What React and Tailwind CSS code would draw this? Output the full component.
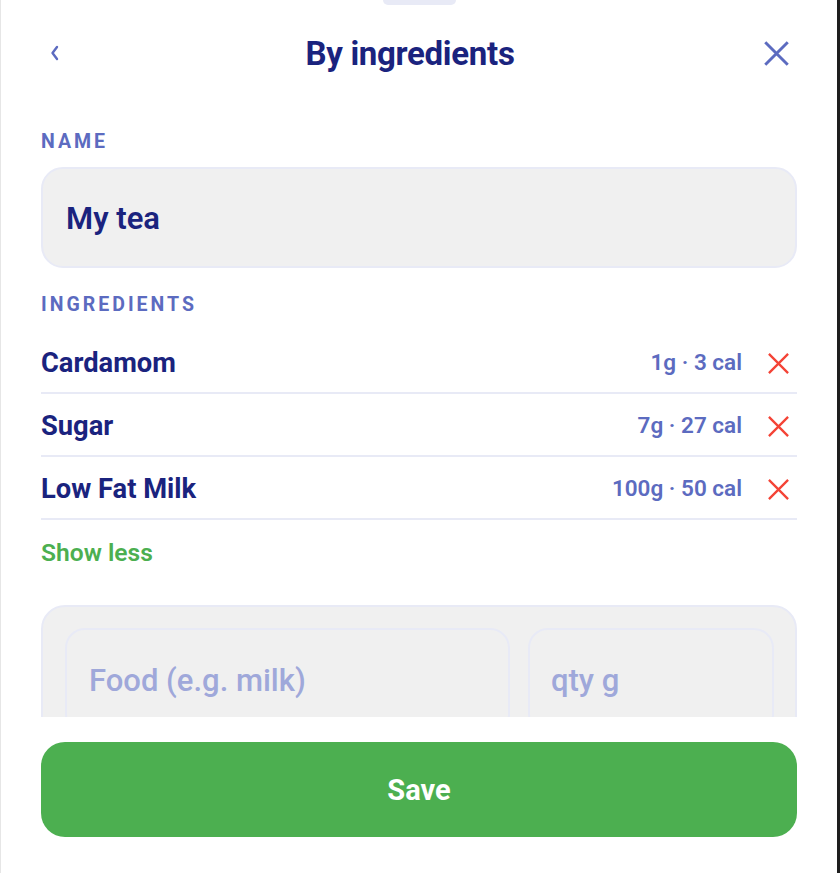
import React from 'react';

const ingredients = [
  { name: 'Cardamom', detail: '1g · 3 cal' },
  { name: 'Sugar', detail: '7g · 27 cal' },
  { name: 'Low Fat Milk', detail: '100g · 50 cal' },
];

function ChevronLeft() {
  return (
    <svg width="9" height="16" viewBox="0 0 9 16" fill="none">
      <path d="M7 2 L2.5 8 L7 14" stroke="#5c6bc0" strokeWidth="2.4" strokeLinecap="round" strokeLinejoin="round" />
    </svg>
  );
}

function Cross({ size, color, width }) {
  return (
    <svg width={size} height={size} viewBox="0 0 24 24" fill="none">
      <path d="M2 2 L22 22 M22 2 L2 22" stroke={color} strokeWidth={width} strokeLinecap="butt" />
    </svg>
  );
}

export default function App() {
  return (
    <div
      className="relative flex h-[873px] w-[840px] flex-col overflow-hidden border-l border-r-[3px] border-l-[#e6e6e6] border-r-[#1e1e1e] bg-white"
      style={{ fontFamily: 'Roboto, "Noto Sans", sans-serif' }}
    >
      {/* drag handle */}
      <div className="absolute left-[382px] top-0 h-[5px] w-[73px] rounded-b-[5px] bg-[#e8eaf6]" />

      <div className="flex h-[106px] shrink-0 items-center pl-[40px] pr-[40px]">
        <button className="flex w-[20px] justify-end pr-[2px]">
          <ChevronLeft />
        </button>
        <h1 className="flex-1 text-center text-[33px] font-bold leading-none tracking-[-0.3px] text-[#1a237e]">
          By ingredients
        </h1>
        <button className="flex w-[38px] justify-start pl-[4px]">
          <Cross size={27} color="#5c6bc0" width={2.6} />
        </button>
      </div>

      <div className="h-[611px] shrink-0 overflow-hidden pl-[40px] pr-[40px]">
        <div className="mt-[24px] text-[19.5px] font-bold leading-[24px] tracking-[3px] text-[#5c6bc0]">NAME</div>
        <div className="mt-[13px] flex h-[101px] items-center rounded-[22px] border-2 border-[#e8eaf6] bg-[#f0f0f0] px-[23px] pt-[4px]">
          <span className="text-[31px] font-semibold text-[#1a237e]">My tea</span>
        </div>

        <div className="mt-[25px] text-[19.5px] font-bold leading-[24px] tracking-[3px] text-[#5c6bc0]">INGREDIENTS</div>

        <div className="mt-[14px]">
          {ingredients.map((item) => (
            <div key={item.name} className="flex h-[63px] items-center border-b-2 border-[#e8eaf6] pt-[3px]">
              <span className="flex-1 text-[27.3px] font-bold text-[#1a237e]">{item.name}</span>
              <span className="text-[22.5px] font-semibold text-[#5c6bc0]">{item.detail}</span>
              <span className="ml-[25px] mr-[7px] flex">
                <Cross size={23} color="#f44336" width={2.4} />
              </span>
            </div>
          ))}
        </div>

        <div className="mt-[18px] text-[24.6px] font-semibold leading-[30px] text-[#4caf50]">Show less</div>

        <div className="mt-[37px] flex gap-[18px] rounded-[24px] border-2 border-[#e8eaf6] bg-[#f0f0f0] pb-[20px] pl-[22px] pr-[21px] pt-[21px]">
          <div className="flex h-[106px] w-[445px] items-center rounded-[20px] border-2 border-[#e8eaf6] px-[22px]">
            <span className="text-[31px] font-medium text-[#9fa8da]">Food (e.g. milk)</span>
          </div>
          <div className="flex h-[106px] flex-1 items-center rounded-[20px] border-2 border-[#e8eaf6] px-[21px]">
            <span className="text-[31px] font-medium text-[#9fa8da]">qty g</span>
          </div>
        </div>
      </div>

      <div className="pl-[40px] pr-[40px] pt-[25px]">
        <button className="flex h-[95px] w-full items-center justify-center rounded-[24px] bg-[#4caf50] pt-[3px] text-[29px] font-bold text-white">
          Save
        </button>
      </div>
    </div>
  );
}
